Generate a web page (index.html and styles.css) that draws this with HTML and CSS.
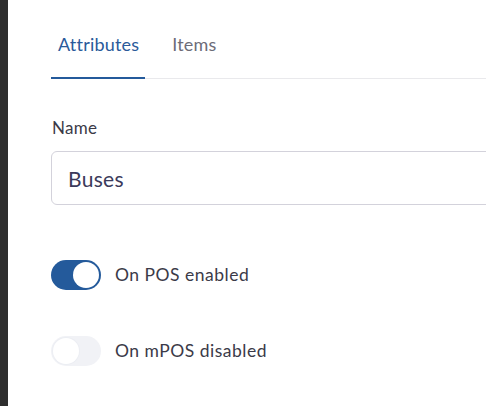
FILE: index.html
```html
<!DOCTYPE html>
<html>
<head>
<meta charset="utf-8">
<link rel="stylesheet" href="styles.css">
</head>
<body>
<div class="page">
  <aside class="strip"></aside>
  <main class="content">
    <nav class="tabs">
      <div class="tab active">Attributes</div>
      <div class="tab">Items</div>
    </nav>
    <section class="field">
      <label class="label">Name</label>
      <div class="input">Buses</div>
    </section>
    <div class="toggles">
      <div class="toggle-row">
        <span class="switch on"><span class="knob"></span></span>
        <span class="toggle-label">On POS enabled</span>
      </div>
      <div class="toggle-row">
        <span class="switch off"><span class="knob"></span></span>
        <span class="toggle-label">On mPOS disabled</span>
      </div>
    </div>
  </main>
</div>
</body>
</html>
```

FILE: styles.css
```css
html, body {
  margin: 0;
  padding: 0;
  background: #ffffff;
}
body {
  font-family: Lato, "Open Sans", sans-serif;
  color: #3b3a48;
  overflow: hidden;
}
.page {
  display: flex;
  width: 486px;
  height: 406px;
  overflow: hidden;
}
.strip {
  width: 8px;
  flex: none;
  background: #2e2e2e;
}
.content {
  flex: 1;
  padding-left: 43px;
  min-width: 0;
}
.tabs {
  display: flex;
  border-bottom: 1px solid #e9e9ec;
  height: 79px;
  box-sizing: border-box;
  width: 500px;
}
.tab {
  padding: 32px 6px 0 7px;
  margin-right: 20px;
  font-size: 18px;
  line-height: 24px;
  letter-spacing: 0.2px;
  color: #6d6c78;
  box-sizing: border-box;
}
.tab.active {
  color: #2a5a9a;
  border-bottom: 2px solid #245a9b;
  margin-bottom: -1px;
}
.field {
  padding-top: 38px;
}
.label {
  display: block;
  font-size: 17px;
  line-height: 22px;
  letter-spacing: 0.3px;
  color: #3b3a48;
  margin-left: 1px;
}
.input {
  margin-top: 12px;
  width: 500px;
  height: 54px;
  box-sizing: border-box;
  border: 1px solid #d3d2db;
  border-radius: 6px;
  padding: 0 16px;
  display: flex;
  align-items: center;
  font-size: 21px;
  letter-spacing: 0.3px;
  color: #3b3a5a;
}
.toggles {
  padding-top: 55px;
  display: flex;
  flex-direction: column;
  gap: 46px;
}
.toggle-row {
  display: flex;
  align-items: center;
  gap: 14px;
}
.switch {
  width: 50px;
  height: 30px;
  border-radius: 15px;
  box-sizing: border-box;
  padding: 2px;
  display: flex;
  flex: none;
}
.switch.on {
  background: #245a9b;
  justify-content: flex-end;
}
.switch.off {
  background: #f1f2f6;
  justify-content: flex-start;
}
.knob {
  width: 26px;
  height: 26px;
  border-radius: 50%;
  background: #ffffff;
}
.switch.off .knob {
  box-shadow: 0 0 0 1px #eceef3;
}
.toggle-label {
  font-size: 17.5px;
  line-height: 22px;
  letter-spacing: 0.5px;
  color: #3b3a48;
}
```
